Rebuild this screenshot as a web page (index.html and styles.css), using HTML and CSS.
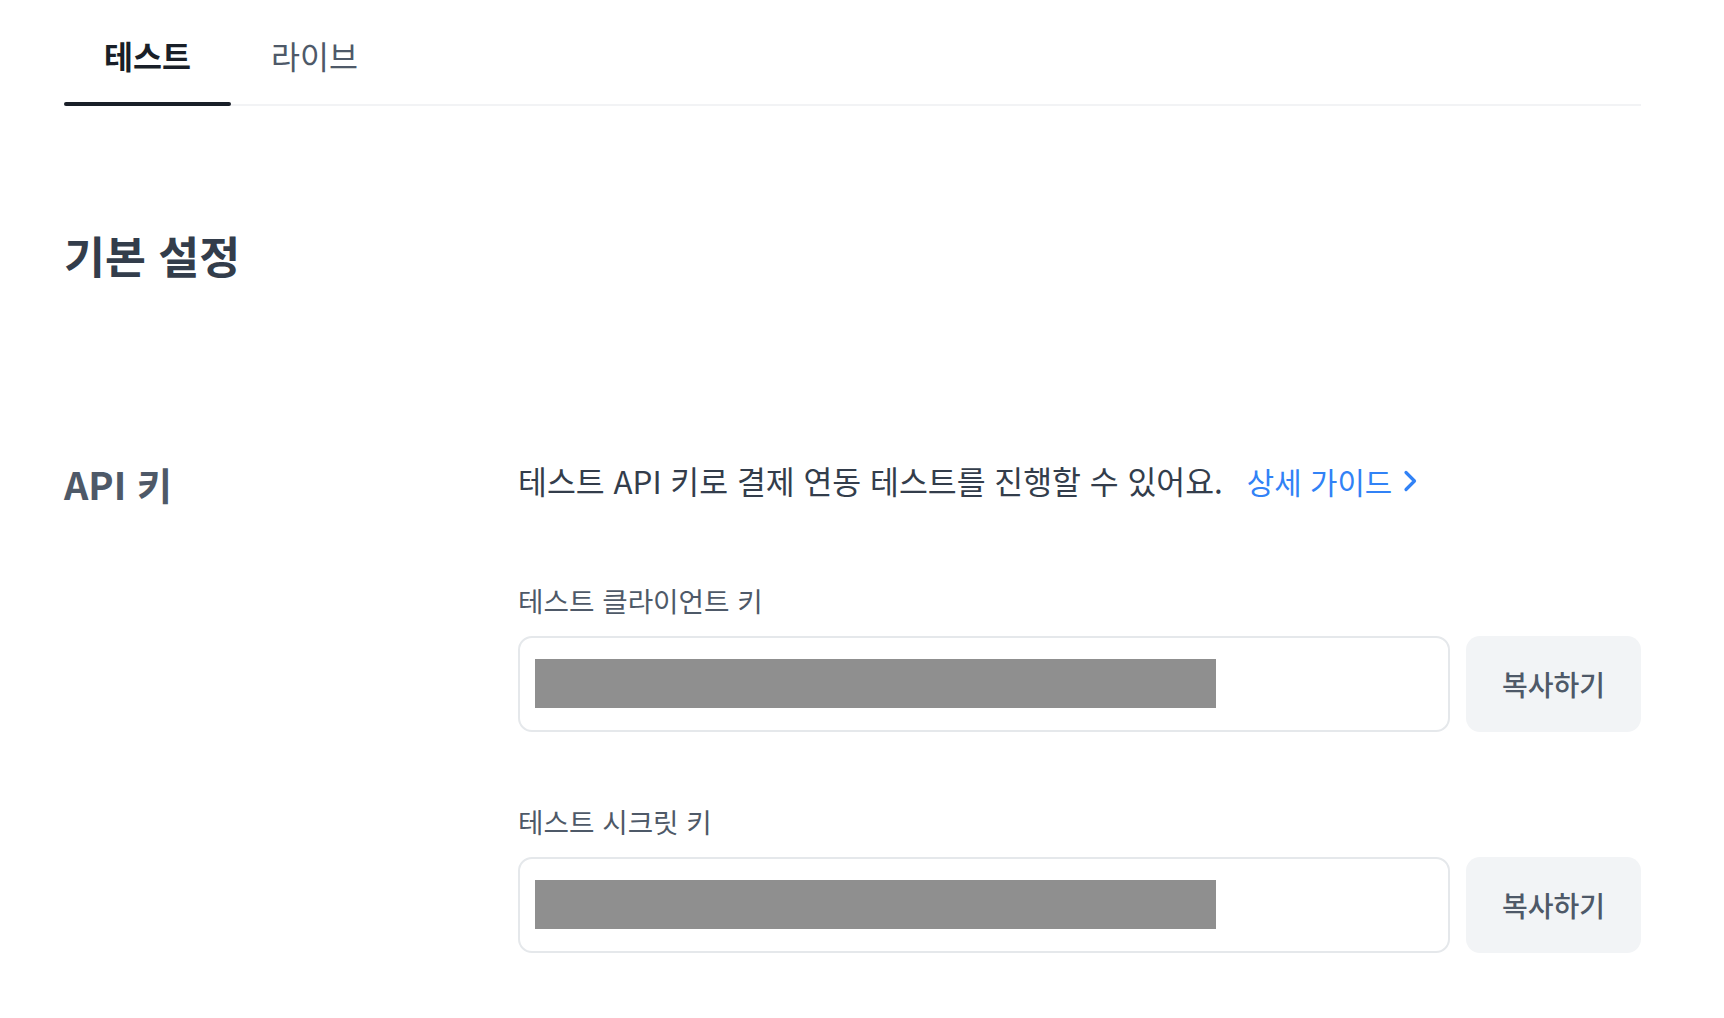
FILE: index.html
```html
<!DOCTYPE html>
<html lang="ko">
<head>
<meta charset="utf-8">
<title>API 키</title>
<link rel="stylesheet" href="styles.css">
</head>
<body>
<div class="page">
  <nav class="tabs">
    <div class="tab tab-active">테스트</div>
    <div class="tab">라이브</div>
  </nav>

  <h1 class="section-title">기본 설정</h1>

  <section class="setting-row">
    <h2 class="setting-name">API 키</h2>
    <div class="setting-body">
      <p class="desc">테스트 API 키로 결제 연동 테스트를 진행할 수 있어요.<a class="guide-link" href="#">상세 가이드<svg class="chev" viewBox="0 0 14 22" width="14" height="22" aria-hidden="true"><path d="M3 2.5 L11.5 11 L3 19.5" fill="none" stroke="currentColor" stroke-width="3.2" stroke-linecap="round" stroke-linejoin="round"/></svg></a></p>

      <div class="field">
        <div class="field-label">테스트 클라이언트 키</div>
        <div class="field-row">
          <div class="key-box"><span class="key-mask"></span></div>
          <button class="copy-btn" type="button">복사하기</button>
        </div>
      </div>

      <div class="field field-second">
        <div class="field-label">테스트 시크릿 키</div>
        <div class="field-row">
          <div class="key-box"><span class="key-mask"></span></div>
          <button class="copy-btn" type="button">복사하기</button>
        </div>
      </div>
    </div>
  </section>
</div>
</body>
</html>
```

FILE: styles.css
```css
* {
  box-sizing: border-box;
}

html, body {
  margin: 0;
  padding: 0;
  background: #ffffff;
}

body {
  font-family: "Noto Sans CJK KR", "Noto Sans", sans-serif;
  color: #333d4b;
}

.page {
  margin-left: 64px;
  width: 1577px;
}

.tabs {
  display: flex;
  border-bottom: 2px solid #f2f3f5;
  height: 106px;
}

.tab {
  position: relative;
  height: 104px;
  padding: 33px 40px 0;
  font-size: 31.5px;
  line-height: 44px;
  color: #4e5968;
  font-weight: 400;
}

.tab-active {
  color: #191f28;
  font-weight: 700;
}

.tab-active::after {
  content: "";
  position: absolute;
  left: 0;
  right: 0;
  bottom: -2px;
  height: 4px;
  border-radius: 2px;
  background: #191f28;
}

.section-title {
  margin: 121px 0 0;
  font-size: 44.5px;
  line-height: 56px;
  font-weight: 700;
  color: #333d4b;
}

.setting-row {
  display: flex;
  margin-top: 178px;
}

.setting-name {
  width: 454px;
  flex: none;
  margin: 0;
  font-size: 38px;
  line-height: 46px;
  font-weight: 600;
  color: #4e5968;
}

.setting-body {
  flex: 1;
}

.desc {
  margin: 0;
  font-size: 31.4px;
  line-height: 40px;
  color: #333d4b;
  display: flex;
  align-items: center;
}

.guide-link {
  margin-left: 24px;
  font-size: 29.8px;
  color: #3182f6;
  text-decoration: none;
  display: inline-flex;
  align-items: center;
}

.chev {
  margin-left: 11px;
  color: #3182f6;
}

.field {
  margin-top: 82px;
}

.field-second {
  margin-top: 72px;
}

.field-label {
  font-size: 27.7px;
  line-height: 34px;
  color: #4e5968;
}

.field-row {
  display: flex;
  gap: 16px;
  margin-top: 19px;
}

.key-box {
  width: 932px;
  height: 96px;
  border: 2px solid #e5e8eb;
  border-radius: 14px;
  padding: 21px 15px;
}

.key-mask {
  display: block;
  width: 681px;
  height: 49px;
  background: #8f8f8f;
}

.copy-btn {
  width: 175px;
  height: 96px;
  border: none;
  border-radius: 14px;
  background: #f2f4f6;
  color: #4e5968;
  font-family: inherit;
  font-size: 28px;
  font-weight: 500;
  padding: 0;
}
```
